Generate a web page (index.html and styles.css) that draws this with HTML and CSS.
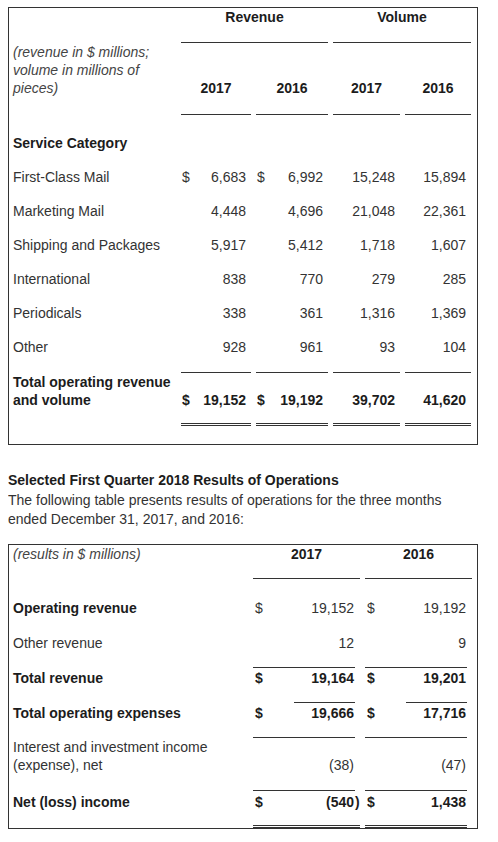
FILE: index.html
```html
<!DOCTYPE html>
<html>
<head>
<title>Results of Operations</title>
<link rel="stylesheet" href="styles.css">
</head>
<body>

<div class="wrap">
  <div class="box box-vol">
    <table class="vol">
      <colgroup>
        <col style="width:163px"><col style="width:70px"><col style="width:72px"><col style="width:67px"><col style="width:66px">
      </colgroup>
      <tr class="r1">
        <td></td>
        <td colspan="2" class="hd bb">Revenue</td>
        <td colspan="2" class="hd bb">Volume</td>
      </tr>
      <tr class="r2">
        <td class="note">(revenue in $ millions; volume in millions of pieces)</td>
        <td class="hd bb">2017</td>
        <td class="hd bb">2016</td>
        <td class="hd bb">2017</td>
        <td class="hd bb">2016</td>
      </tr>
      <tr class="r3">
        <td class="strong">Service Category</td>
        <td></td><td></td><td></td><td></td>
      </tr>
      <tr class="r4">
        <td>First-Class Mail</td>
        <td class="n"><span class="cur">$</span>6,683</td>
        <td class="n"><span class="cur">$</span>6,992</td>
        <td class="n">15,248</td>
        <td class="n">15,894</td>
      </tr>
      <tr class="r4">
        <td>Marketing Mail</td>
        <td class="n">4,448</td>
        <td class="n">4,696</td>
        <td class="n">21,048</td>
        <td class="n">22,361</td>
      </tr>
      <tr class="r4">
        <td>Shipping and Packages</td>
        <td class="n">5,917</td>
        <td class="n">5,412</td>
        <td class="n">1,718</td>
        <td class="n">1,607</td>
      </tr>
      <tr class="r4">
        <td>International</td>
        <td class="n">838</td>
        <td class="n">770</td>
        <td class="n">279</td>
        <td class="n">285</td>
      </tr>
      <tr class="r4">
        <td>Periodicals</td>
        <td class="n">338</td>
        <td class="n">361</td>
        <td class="n">1,316</td>
        <td class="n">1,369</td>
      </tr>
      <tr class="r5">
        <td>Other</td>
        <td class="n">928</td>
        <td class="n">961</td>
        <td class="n">93</td>
        <td class="n">104</td>
      </tr>
      <tr class="r6">
        <td class="strong">Total operating revenue and volume</td>
        <td class="n strong bt bd"><span class="cur">$</span>19,152</td>
        <td class="n strong bt bd"><span class="cur">$</span>19,192</td>
        <td class="n strong bt bd">39,702</td>
        <td class="n strong bt bd">41,620</td>
      </tr>
    </table>
  </div>

  <h3 class="title">Selected First Quarter 2018 Results of Operations</h3>
  <p class="intro">The following table presents results of operations for the three months ended December 31, 2017, and 2016:</p>

  <div class="box">
    <table class="res">
      <colgroup>
        <col style="width:244px"><col style="width:41px"><col style="width:61px"><col style="width:5px"><col style="width:5px">
        <col style="width:41px"><col style="width:61px"><col style="width:5px"><col style="width:5px">
      </colgroup>
      <tr class="ra">
        <td class="lbl note">(results in $ millions)</td>
        <td colspan="3" class="hd bb">2017</td>
        <td></td>
        <td colspan="3" class="hd bb">2016</td>
        <td></td>
      </tr>
      <tr class="rb">
        <td class="lbl strong">Operating revenue</td>
        <td class="d">$</td><td class="n">19,152</td><td></td>
        <td></td>
        <td class="d">$</td><td class="n">19,192</td><td></td>
        <td></td>
      </tr>
      <tr class="rc">
        <td class="lbl">Other revenue</td>
        <td></td><td class="n">12</td><td></td>
        <td></td>
        <td></td><td class="n">9</td><td></td>
        <td></td>
      </tr>
      <tr class="rd strong">
        <td class="lbl">Total revenue</td>
        <td class="d bt">$</td><td class="n bt">19,164</td><td></td>
        <td></td>
        <td class="d bt">$</td><td class="n bt">19,201</td><td></td>
        <td></td>
      </tr>
      <tr class="re strong">
        <td class="lbl">Total operating expenses</td>
        <td class="d bb">$</td><td class="n bt bb">19,666</td><td></td>
        <td></td>
        <td class="d bb">$</td><td class="n bt bb">17,716</td><td></td>
        <td></td>
      </tr>
      <tr class="rf">
        <td class="lbl">Interest and investment income (expense), net</td>
        <td></td><td class="n">(38)</td><td></td>
        <td></td>
        <td></td><td class="n">(47)</td><td></td>
        <td></td>
      </tr>
      <tr class="rg strong">
        <td class="lbl">Net (loss) income</td>
        <td class="d bt bd">$</td><td class="n bt bd">(540</td><td class="p bd">)</td>
        <td></td>
        <td class="d bt bd">$</td><td class="n bt bd">1,438</td><td></td>
        <td></td>
      </tr>
    </table>
  </div>
</div>

</body>
</html>
```

FILE: styles.css
```css
body { margin: 7px 8px 8px; font-family: "Liberation Sans", Arial, sans-serif; font-size: 14px; color: #333; background: #fff; }
.wrap { width: 470px; }
.box { border: 1px solid #333; }
.box-vol { padding-bottom: 18px; }

table { border-collapse: separate; table-layout: fixed; }
td { padding: 0; line-height: 18px; vertical-align: top; border: 0 solid transparent; }

.vol { width: 468px; margin-left: -1px; border-spacing: 5px 0; }
.res { width: 468px; border-spacing: 0; }

.strong { font-weight: bold; color: #1c1c1c; }
.note { font-style: italic; color: #444; }
.hd { font-weight: bold; color: #1c1c1c; text-align: center; }
.n { text-align: right; }
.vol .n { padding-right: 5px; padding-left: 1px; }
.res .n { padding-right: 1px; }
.cur { float: left; }
.d { padding-left: 2px; }
.lbl { padding-left: 4px; }

.bt { border-top-color: #333 !important; }
.bb { border-bottom-color: #333 !important; }
.bd { border-bottom-color: #333 !important; }

/* first table rows */
.r1 td { padding-bottom: 16px; border-bottom-width: 1px; }
.r2 td { padding-bottom: 17px; border-bottom-width: 1px; vertical-align: bottom; }
.r3 td { padding: 19px 0 8px; }
.r4 td { padding-top: 8px; padding-bottom: 8px; }
.r5 td { padding-top: 8px; padding-bottom: 16px; }
.r6 td { padding-bottom: 14px; border-top-width: 1px; border-bottom: 3px double transparent; vertical-align: bottom; }
.r6 td:first-child { vertical-align: top; }

/* second table rows */
.ra td { padding-bottom: 15px; border-bottom-width: 1px; }
.rb td { padding-top: 20px; padding-bottom: 8px; }
.rc td { padding-top: 9px; padding-bottom: 15px; }
.rd td { padding-top: 1px; padding-bottom: 15px; border-top-width: 1px; }
.re td { padding-top: 1px; padding-bottom: 15px; border-top-width: 1px; border-bottom-width: 1px; }
.rf td { padding-bottom: 16px; vertical-align: bottom; }
.rf td.lbl { vertical-align: top; }
.rg td { padding-top: 2px; padding-bottom: 14px; border-top-width: 1px; border-bottom: 3px double transparent; }

.title { margin: 26px 0 0; font-size: 14px; line-height: 19.5px; color: #1c1c1c; }
.intro { margin: 0 0 14.5px; line-height: 19.5px; }
```
